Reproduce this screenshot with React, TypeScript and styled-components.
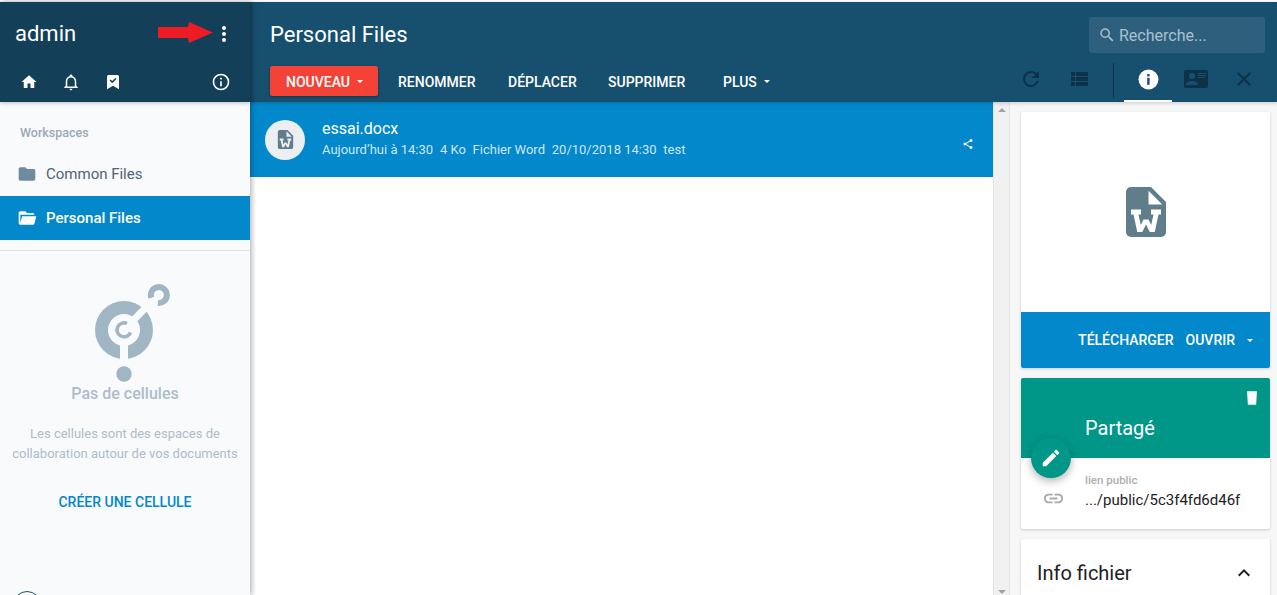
import React from 'react'
import styled, { createGlobalStyle } from 'styled-components'

const GlobalStyle = createGlobalStyle`
  html, body {
    margin: 0;
    padding: 0;
    height: 100%;
    overflow: hidden;
    background: #fff;
  }
  * { box-sizing: border-box; }
  body { font-family: Roboto, 'Liberation Sans', sans-serif; }
`

const Shell = styled.div`
  position: relative;
  display: flex;
  width: 1277px;
  height: 595px;
  padding-top: 2px;
  overflow: hidden;
  background: #fff;
`

const Sidebar = styled.aside`
  position: relative;
  z-index: 3;
  flex: 0 0 250px;
  display: flex;
  flex-direction: column;
  background: #f9fafc;
  box-shadow: 2px 0 5px rgba(0, 0, 0, 0.28);

  & > * {
    flex: none;
  }
`

const SideHeader = styled.div`
  height: 100px;
  background: #133f58;
  color: #fff;
  box-shadow: 0 1px 4px rgba(0, 0, 0, 0.25);
`

const UserRow = styled.div`
  height: 60px;
  padding: 3px 14px 0 15px;
  display: flex;
  align-items: center;
  justify-content: space-between;
  font-size: 22px;
`

const IconRow = styled.div`
  height: 40px;
  padding: 0 19px 0 20px;
  display: flex;
  align-items: center;
  gap: 24px;
`

const Spacer = styled.div`
  flex: 1;
`

const SectionLabel = styled.div`
  padding: 24px 0 0 20px;
  height: 50px;
  font-size: 12.5px;
  line-height: 14px;
  font-weight: 500;
  color: #9aa9b6;
`

const NavItem = styled.div<{ $active?: boolean }>`
  height: 44px;
  padding-left: 17px;
  display: flex;
  align-items: center;
  gap: 9px;
  font-size: 15px;
  font-weight: ${p => (p.$active ? 500 : 400)};
  color: ${p => (p.$active ? '#fff' : '#4e6476')};
  background: ${p => (p.$active ? '#0288cb' : 'transparent')};
`

const Separator = styled.div`
  height: 1px;
  margin-top: 10px;
  background: #dfe2e5;
`

const EmptyState = styled.div`
  padding-top: 30px;
  display: flex;
  flex-direction: column;
  align-items: center;
  text-align: center;
`

const EmptyTitle = styled.div`
  margin-top: 1px;
  font-size: 16px;
  line-height: 20px;
  font-weight: 500;
  color: #adbdca;
`

const EmptyText = styled.div`
  margin-top: 20px;
  font-size: 13px;
  line-height: 20px;
  white-space: nowrap;
  color: #adbdca;
`

const CreateLink = styled.div`
  margin-top: 28px;
  font-size: 14px;
  line-height: 20px;
  font-weight: 500;
  color: #0288cb;
`

const Avatar = styled.div`
  width: 28px;
  height: 28px;
  margin: 79px 0 0 13px;
  border: 1.5px solid #1a4f6e;
  border-radius: 50%;
`

const Main = styled.div`
  flex: 1;
  min-width: 0;
  display: flex;
  flex-direction: column;
`

const TopBar = styled.header`
  position: relative;
  z-index: 2;
  flex: none;
  height: 100px;
  background: #174f6f;
  color: #fff;
  box-shadow: 0 1px 4px rgba(0, 0, 0, 0.2);
`

const TitleRow = styled.div`
  height: 60px;
  padding: 4px 12px 0 20px;
  display: flex;
  align-items: center;
  justify-content: space-between;
`

const PageTitle = styled.h1`
  margin: 0;
  font-size: 22px;
  font-weight: 400;
`

const SearchBox = styled.div`
  width: 176px;
  height: 36px;
  margin-top: 2px;
  padding-left: 9px;
  display: flex;
  align-items: center;
  gap: 3px;
  border-radius: 3px;
  background: rgba(255, 255, 255, 0.1);
  color: #a9c0ce;
  font-size: 16px;
`

const ToolRow = styled.div`
  height: 40px;
  padding: 4px 9px 0 20px;
  display: flex;
  align-items: flex-start;
`

const NewButton = styled.div`
  width: 108px;
  height: 30px;
  padding: 1px 0 0 1px;
  display: flex;
  align-items: center;
  justify-content: center;
  gap: 7px;
  border-radius: 2px;
  background: #f44336;
  box-shadow: 0 1px 3px rgba(0, 0, 0, 0.3);
  font-size: 14px;
  font-weight: 500;
`

const FlatAction = styled.div<{ $width: number }>`
  width: ${p => p.$width}px;
  height: 30px;
  padding-top: 1px;
  display: flex;
  align-items: center;
  font-size: 14px;
  font-weight: 500;
`

const Caret = styled.span<{ $gap?: number }>`
  display: inline-block;
  margin-left: ${p => p.$gap ?? 0}px;
  width: 0;
  height: 0;
  border-left: 3.5px solid transparent;
  border-right: 3.5px solid transparent;
  border-top: 3.5px solid currentColor;
`

const ToolIcon = styled.div<{ $active?: boolean }>`
  position: relative;
  width: 48px;
  height: 32px;
  margin-top: -3px;
  display: flex;
  align-items: center;
  justify-content: center;
  color: #0d3247;

  &::after {
    content: '';
    display: ${p => (p.$active ? 'block' : 'none')};
    position: absolute;
    left: 0;
    right: 0;
    bottom: -7px;
    height: 2px;
    background: #fff;
  }
`

const ToolDivider = styled.div`
  width: 1px;
  height: 35px;
  margin: -3px 10px 0 10px;
  background: #0d3247;
`

const Content = styled.div`
  flex: 1;
  min-height: 0;
  display: flex;
`

const ListArea = styled.main`
  flex: 0 0 743px;
  background: #fff;
`

const FileRow = styled.div`
  height: 75px;
  padding: 0 19px 0 15px;
  display: flex;
  align-items: center;
  gap: 17px;
  background: #0288cb;
  color: #fff;
`

const FileThumb = styled.div`
  width: 40px;
  height: 40px;
  flex: none;
  display: flex;
  align-items: center;
  justify-content: center;
  border-radius: 50%;
  background: #eceff1;
  color: #607d8b;
`

const FileInfo = styled.div`
  flex: 1;
  min-width: 0;
  padding-bottom: 2px;
`

const FileName = styled.div`
  font-size: 16px;
  line-height: 22px;
`

const FileMeta = styled.div`
  display: flex;
  gap: 6.8px;
  font-size: 13px;
  line-height: 20px;
  color: #cfe7f5;
`

const ShareIcon = styled.div`
  margin-top: 9px;
`

const ScrollTrack = styled.div`
  flex: 0 0 17px;
  display: flex;
  flex-direction: column;
  justify-content: space-between;
  align-items: center;
  padding: 6px 0 1px;
  background: #f1f1f1;
  border-left: 1px solid #e4e4e4;
  border-right: 1px solid #e4e4e4;
`

const ScrollArrow = styled.span<{ $down?: boolean }>`
  width: 0;
  height: 0;
  border-left: 4px solid transparent;
  border-right: 4px solid transparent;
  ${p =>
    p.$down
      ? 'border-top: 4px solid #a3a3a3;'
      : 'border-bottom: 4px solid #a3a3a3;'}
`

const DetailPanel = styled.div`
  flex: 1;
  padding: 10px 7px 0 11px;
  display: flex;
  flex-direction: column;
  gap: 10px;
  background: #f7f7f7;
`

const Card = styled.section`
  position: relative;
  flex: none;
  border-radius: 2px;
  background: #fff;
  box-shadow: 0 1px 3px rgba(0, 0, 0, 0.18);
`

const PreviewArea = styled.div`
  height: 200px;
  display: flex;
  align-items: center;
  justify-content: center;
  color: #607d8b;
`

const PreviewActions = styled.div`
  height: 56px;
  padding: 0 17px 0 0;
  display: flex;
  align-items: center;
  justify-content: flex-end;
  gap: 12px;
  border-radius: 0 0 2px 2px;
  background: #0288cb;
  color: #fff;
  font-size: 14px;
  font-weight: 500;
`

const ShareHeader = styled.div`
  height: 80px;
  padding: 11px 9px 0 64px;
  display: flex;
  flex-direction: column;
  border-radius: 2px 2px 0 0;
  background: #009688;
  color: #fff;
  font-size: 20px;
`

const TrashButton = styled.div`
  align-self: flex-end;
  height: 14px;
  line-height: 0;
`

const ShareTitle = styled.div`
  margin-top: 13px;
  line-height: 24px;
`

const EditFab = styled.div`
  position: absolute;
  left: 10px;
  top: 60px;
  width: 40px;
  height: 40px;
  display: flex;
  align-items: center;
  justify-content: center;
  border-radius: 50%;
  background: #009688;
  color: #fff;
  box-shadow: 0 3px 8px rgba(0, 0, 0, 0.3);
`

const ShareBody = styled.div`
  height: 71px;
  padding-top: 15px;
  display: flex;
  gap: 20px;
`

const LinkIcon = styled.div`
  margin: 14px 0 0 21px;
  color: #a8a8a8;
  line-height: 0;
`

const ShareLabel = styled.div`
  font-size: 11.5px;
  line-height: 14px;
  font-weight: 500;
  color: #aeaeae;
`

const ShareValue = styled.div`
  margin-top: 3px;
  font-size: 15px;
  line-height: 20px;
  color: #212121;
`

const InfoHeader = styled.div`
  height: 68px;
  padding: 0 14px 1px 16px;
  display: flex;
  align-items: center;
  justify-content: space-between;
  font-size: 20px;
  color: #212121;
`

const Annotation = styled.svg`
  position: absolute;
  left: 158px;
  top: 21px;
  z-index: 5;
`

type IconProps = { d: string; size?: number; color?: string }

const Icon = ({ d, size = 24, color = 'currentColor' }: IconProps) => (
  <svg width={size} height={size} viewBox="0 0 24 24" fill={color} style={{ display: 'block', flex: 'none' }}>
    <path d={d} />
  </svg>
)

const paths = {
  dots: 'M12,16A2,2 0 0,1 14,18A2,2 0 0,1 12,20A2,2 0 0,1 10,18A2,2 0 0,1 12,16M12,10A2,2 0 0,1 14,12A2,2 0 0,1 12,14A2,2 0 0,1 10,12A2,2 0 0,1 12,10M12,4A2,2 0 0,1 14,6A2,2 0 0,1 12,8A2,2 0 0,1 10,6A2,2 0 0,1 12,4Z',
  home: 'M10,20V14H14V20H19V12H22L12,3L2,12H5V20H10Z',
  bell: 'M10 21H14C14 22.1 13.1 23 12 23S10 22.1 10 21M21 19V20H3V19L5 17V11C5 7.9 7 5.2 10 4.3V4C10 2.9 10.9 2 12 2S14 2.9 14 4V4.3C17 5.2 19 7.9 19 11V17L21 19M17 11C17 8.2 14.8 6 12 6S7 8.2 7 11V18H17V11Z',
  bookmark: 'M6,2.5H18A2,2 0 0,1 20,4.5V21.5L12,17L4,21.5V4.5A2,2 0 0,1 6,2.5M11,13.5L16.6,7.9L15.2,6.5L11,10.7L8.8,8.5L7.4,9.9L11,13.5Z',
  infoOutline: 'M11,9H13V7H11M12,20C7.59,20 4,16.41 4,12C4,7.59 7.59,4 12,4C16.41,4 20,7.59 20,12C20,16.41 16.41,20 12,20M12,2A10,10 0 0,0 2,12A10,10 0 0,0 12,22A10,10 0 0,0 22,12A10,10 0 0,0 12,2M11,17H13V11H11V17Z',
  folder: 'M10,4H4C2.89,4 2,4.89 2,6V18A2,2 0 0,0 4,20H20A2,2 0 0,0 22,18V8C22,6.89 21.1,6 20,6H12L10,4Z',
  folderOpen: 'M19,20H4C2.89,20 2,19.1 2,18V6C2,4.89 2.89,4 4,4H10L12,6H19A2,2 0 0,1 21,8H21L4,8V18L6.14,10H23.21L20.93,18.5C20.7,19.37 19.92,20 19,20Z',
  magnify: 'M9.5,3A6.5,6.5 0 0,1 16,9.5C16,11.11 15.41,12.59 14.44,13.73L14.71,14H15.5L20.5,19L19,20.5L14,15.5V14.71L13.73,14.44C12.59,15.41 11.11,16 9.5,16A6.5,6.5 0 0,1 3,9.5A6.5,6.5 0 0,1 9.5,3M9.5,5C7,5 5,7 5,9.5C5,12 7,14 9.5,14C12,14 14,12 14,9.5C14,7 12,5 9.5,5Z',
  refresh: 'M17.65,6.35C16.2,4.9 14.21,4 12,4A8,8 0 0,0 4,12A8,8 0 0,0 12,20C15.73,20 18.84,17.45 19.73,14H17.65C16.83,16.33 14.61,18 12,18A6,6 0 0,1 6,12A6,6 0 0,1 12,6C13.66,6 15.14,6.69 16.22,7.78L13,11H20V4L17.65,6.35Z',
  list: 'M9,5V9H21V5M9,19H21V15H9M9,14H21V10H9M4,9H8V5H4M4,19H8V15H4M4,14H8V10H4V14Z',
  card: 'M2,3H22C23.05,3 24,3.95 24,5V19C24,20.05 23.05,21 22,21H2C0.95,21 0,20.05 0,19V5C0,3.95 0.95,3 2,3M14,6V7H22V6H14M14,8V9H21.5L22,9V8H14M14,10V11H21V10H14M8,13.91C6,13.91 2,15 2,17V18H14V17C14,15 10,13.91 8,13.91M8,6A3,3 0 0,0 5,9A3,3 0 0,0 8,12A3,3 0 0,0 11,9A3,3 0 0,0 8,6Z',
  close: 'M19,6.41L17.59,5L12,10.59L6.41,5L5,6.41L10.59,12L5,17.59L6.41,19L12,13.41L17.59,19L19,17.59L13.41,12L19,6.41Z',
  word: 'M6,2H14L20,8V20A2,2 0 0,1 18,22H6A2,2 0 0,1 4,20V4A2,2 0 0,1 6,2M13,3.5V9H18.5L13,3.5M7,13L8.5,20H10.5L12,17L13.5,20H15.5L17,13H18V11H14V13H15L14.1,17.2L13,15V15H11V15L9.9,17.2L9,13H10V11H6V13H7Z',
  share: 'M18,16.08C17.24,16.08 16.56,16.38 16.04,16.85L8.91,12.7C8.96,12.47 9,12.24 9,12C9,11.76 8.96,11.53 8.91,11.3L15.96,7.19C16.5,7.69 17.21,8 18,8A3,3 0 0,0 21,5A3,3 0 0,0 18,2A3,3 0 0,0 15,5C15,5.24 15.04,5.47 15.09,5.7L8.04,9.81C7.5,9.31 6.79,9 6,9A3,3 0 0,0 3,12A3,3 0 0,0 6,15C6.79,15 7.5,14.69 8.04,14.19L15.16,18.34C15.11,18.55 15.08,18.77 15.08,19C15.08,20.61 16.39,21.91 18,21.91C19.61,21.91 20.92,20.61 20.92,19A2.92,2.92 0 0,0 18,16.08Z',
  pencil: 'M20.71,7.04C21.1,6.65 21.1,6 20.71,5.63L18.37,3.29C18,2.9 17.35,2.9 16.96,3.29L15.12,5.12L18.87,8.87M3,17.25V21H6.75L17.81,9.93L14.06,6.18L3,17.25Z',
  link: 'M3.9,12C3.9,10.29 5.29,8.9 7,8.9H11V7H7A5,5 0 0,0 2,12A5,5 0 0,0 7,17H11V15.1H7C5.29,15.1 3.9,13.71 3.9,12M8,13H16V11H8V13M17,7H13V8.9H17C18.71,8.9 20.1,10.29 20.1,12C20.1,13.71 18.71,15.1 17,15.1H13V17H17A5,5 0 0,0 22,12A5,5 0 0,0 17,7Z',
  chevronUp: 'M7.41,15.41L12,10.83L16.59,15.41L18,14L12,8L6,14L7.41,15.41Z',
  trash: 'M5.5,3H18.5V5.5L17.5,21H6.5L5.5,5.5Z',
}

// cells logo, drawn from the zoomed crop
const CellsLogo = () => (
  <svg width="90" height="102" viewBox="-5 0 90 102" style={{ display: 'block' }}>
    <circle cx="39" cy="49" r="29" fill="#a0b6c4" />
    <circle cx="39" cy="49" r="16" fill="#f9fafc" />
    <rect x="35" y="55" width="8" height="26" fill="#f9fafc" />
    <path d="M39 49L70 17" stroke="#f9fafc" strokeWidth="7" />
    <path d="M42 42.5A7 7 0 1 0 45.5 51.5" fill="none" stroke="#a0b6c4" strokeWidth="3.5" />
    <path d="M66.3 16.7A8 8 0 1 1 73 22" fill="none" stroke="#a0b6c4" strokeWidth="6" />
    <circle cx="39" cy="93" r="7.7" fill="#a0b6c4" />
  </svg>
)

const InfoBadge = () => (
  <svg width="21" height="21" viewBox="0 0 21 21" style={{ display: 'block' }}>
    <circle cx="10.5" cy="10.5" r="10" fill="#fff" />
    <rect x="9.2" y="5" width="2.4" height="2.4" fill="#1a3fa8" />
    <rect x="9.2" y="8.8" width="2.4" height="7" fill="#1a3fa8" />
  </svg>
)

export default function App() {
  return (
    <>
      <GlobalStyle />
      <Shell>
        <Sidebar>
          <SideHeader>
            <UserRow>
              admin
              <Icon d={paths.dots} size={24} />
            </UserRow>
            <IconRow>
              <Icon d={paths.home} size={18} />
              <Icon d={paths.bell} size={18} />
              <Icon d={paths.bookmark} size={18} />
              <Spacer />
              <Icon d={paths.infoOutline} size={20} />
            </IconRow>
          </SideHeader>
          <SectionLabel>Workspaces</SectionLabel>
          <NavItem>
            <Icon d={paths.folder} size={20} color="#6f8ba0" />
            Common Files
          </NavItem>
          <NavItem $active>
            <Icon d={paths.folderOpen} size={20} />
            Personal Files
          </NavItem>
          <Separator />
          <EmptyState>
            <CellsLogo />
            <EmptyTitle>Pas de cellules</EmptyTitle>
            <EmptyText>
              Les cellules sont des espaces de
              <br />
              collaboration autour de vos documents
            </EmptyText>
            <CreateLink>CRÉER UNE CELLULE</CreateLink>
          </EmptyState>
          <Avatar />
        </Sidebar>

        <Main>
          <TopBar>
            <TitleRow>
              <PageTitle>Personal Files</PageTitle>
              <SearchBox>
                <Icon d={paths.magnify} size={18} />
                Recherche...
              </SearchBox>
            </TitleRow>
            <ToolRow>
              <NewButton>
                NOUVEAU
                <Caret />
              </NewButton>
              <FlatAction $width={20} />
              <FlatAction $width={110}>RENOMMER</FlatAction>
              <FlatAction $width={100}>DÉPLACER</FlatAction>
              <FlatAction $width={115}>SUPPRIMER</FlatAction>
              <FlatAction $width={60}>
                PLUS
                <Caret $gap={7} />
              </FlatAction>
              <Spacer />
              <ToolIcon>
                <Icon d={paths.refresh} size={24} />
              </ToolIcon>
              <ToolIcon>
                <Icon d={paths.list} size={24} />
              </ToolIcon>
              <ToolDivider />
              <ToolIcon $active>
                <InfoBadge />
              </ToolIcon>
              <ToolIcon>
                <Icon d={paths.card} size={24} />
              </ToolIcon>
              <ToolIcon>
                <Icon d={paths.close} size={24} />
              </ToolIcon>
            </ToolRow>
          </TopBar>

          <Content>
            <ListArea>
              <FileRow>
                <FileThumb>
                  <Icon d={paths.word} size={23} />
                </FileThumb>
                <FileInfo>
                  <FileName>essai.docx</FileName>
                  <FileMeta>
                    <span>Aujourd’hui à 14:30</span>
                    <span>4 Ko</span>
                    <span>Fichier Word</span>
                    <span>20/10/2018 14:30</span>
                    <span>test</span>
                  </FileMeta>
                </FileInfo>
                <ShareIcon>
                  <Icon d={paths.share} size={12} />
                </ShareIcon>
              </FileRow>
            </ListArea>
            <ScrollTrack>
              <ScrollArrow />
              <ScrollArrow $down />
            </ScrollTrack>
            <DetailPanel>
              <Card>
                <PreviewArea>
                  <Icon d={paths.word} size={60} />
                </PreviewArea>
                <PreviewActions>
                  <span>TÉLÉCHARGER</span>
                  <span>OUVRIR</span>
                  <Caret $gap={0} />
                </PreviewActions>
              </Card>
              <Card>
                <ShareHeader>
                  <TrashButton>
                    <Icon d={paths.trash} size={18} />
                  </TrashButton>
                  <ShareTitle>Partagé</ShareTitle>
                </ShareHeader>
                <EditFab>
                  <Icon d={paths.pencil} size={22} />
                </EditFab>
                <ShareBody>
                  <LinkIcon>
                    <Icon d={paths.link} size={23} />
                  </LinkIcon>
                  <div>
                    <ShareLabel>lien public</ShareLabel>
                    <ShareValue>.../public/5c3f4fd6d46f</ShareValue>
                  </div>
                </ShareBody>
              </Card>
              <Card>
                <InfoHeader>
                  Info fichier
                  <Icon d={paths.chevronUp} size={24} color="#212121" />
                </InfoHeader>
              </Card>
            </DetailPanel>
          </Content>
        </Main>

        <Annotation width="56" height="24" viewBox="0 0 56 24">
          <polygon points="0,6 30,6 31,1 55,11.5 31,22 30,17 0,17" fill="#ed1c24" />
        </Annotation>
      </Shell>
    </>
  )
}
